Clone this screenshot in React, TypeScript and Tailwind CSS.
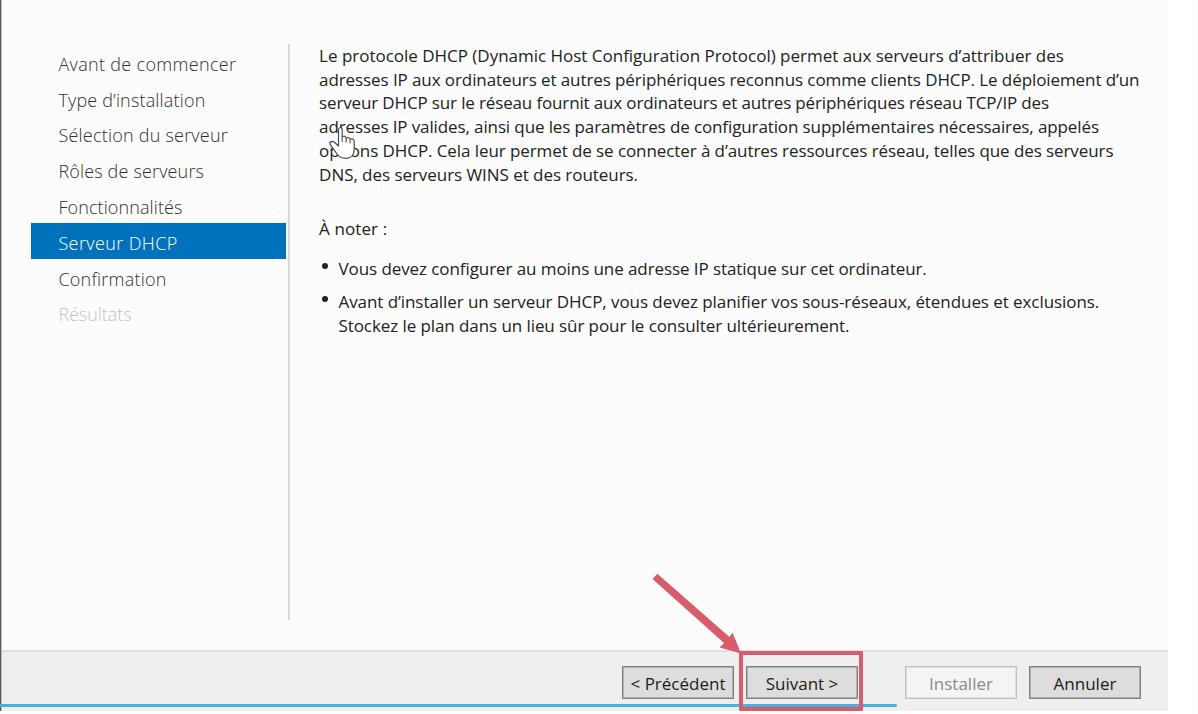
type Line = { text: string; className: string };

const intro: Line[] = [
  { text: "Le protocole DHCP (Dynamic Host Configuration Protocol) permet aux serveurs d’attribuer des", className: "tracking-[-0.015px]" },
  { text: "adresses IP aux ordinateurs et autres périphériques reconnus comme clients DHCP. Le déploiement d’un", className: "tracking-[-0.09px]" },
  { text: "serveur DHCP sur le réseau fournit aux ordinateurs et autres périphériques réseau TCP/IP des", className: "tracking-[-0.145px]" },
  { text: "adresses IP valides, ainsi que les paramètres de configuration supplémentaires nécessaires, appelés", className: "tracking-[-0.115px]" },
  { text: "options DHCP. Cela leur permet de se connecter à d’autres ressources réseau, telles que des serveurs", className: "tracking-[-0.085px]" },
  { text: "DNS, des serveurs WINS et des routeurs.", className: "tracking-[-0.05px]" },
];

const notes: Line[][] = [
  [{ text: "Vous devez configurer au moins une adresse IP statique sur cet ordinateur.", className: "tracking-[-0.08px]" }],
  [
    { text: "Avant d’installer un serveur DHCP, vous devez planifier vos sous-réseaux, étendues et exclusions.", className: "tracking-[-0.07px]" },
    { text: "Stockez le plan dans un lieu sûr pour le consulter ultérieurement.", className: "tracking-[-0.08px]" },
  ],
];

const steps: Line[] = [
  { text: "Avant de commencer", className: "tracking-[0.33px] text-[#303030]" },
  { text: "Type d’installation", className: "tracking-[0.17px] text-[#303030]" },
  { text: "Sélection du serveur", className: "tracking-[0.22px] text-[#303030]" },
  { text: "Rôles de serveurs", className: "tracking-[0.16px] text-[#303030]" },
  { text: "Fonctionnalités", className: "tracking-[0.1px] text-[#303030]" },
  { text: "Serveur DHCP", className: "tracking-[0.4px] bg-[#0072bc] text-white" },
  { text: "Confirmation", className: "tracking-[0.23px] text-[#303030]" },
  { text: "Résultats", className: "tracking-[-0.05px] text-[#c4c4c4]" },
];

function Lines({ lines }: { lines: Line[] }) {
  return (
    <>
      {lines.map((line) => (
        <span key={line.text} className={`block whitespace-nowrap ${line.className}`}>
          {line.text}
        </span>
      ))}
    </>
  );
}

function Button({ label, disabled = false }: { label: string; disabled?: boolean }) {
  return (
    <button
      type="button"
      disabled={disabled}
      className={`flex h-[33px] w-[112px] items-center justify-center whitespace-nowrap border pt-[2px] text-[17px] leading-none ${
        disabled
          ? "border-[#bcc1c5] bg-[#f4f4f4] text-[#8b8b8b] shadow-[inset_0_0_0_1px_#dcdfe1]"
          : "border-[#808080] bg-[#dddddd] text-[#1c1c1c] shadow-[inset_0_0_0_1px_#b0b0b0]"
      }`}
    >
      {label}
    </button>
  );
}

export default function App() {
  return (
    <div className="relative h-[714px] w-[1198px] overflow-hidden border-r border-[#f8f8f8] bg-white font-['Open_Sans','Noto_Sans',sans-serif]">
      <div className="flex h-[711px] w-[1168px]">
        <div className="h-full w-px shrink-0 bg-[#5a5a5c]" />
        <div className="h-full w-px shrink-0 bg-[#bdbdbd]" />
        <div className="flex min-w-0 flex-1 flex-col bg-[#fcfcfc]">
          <div className="flex h-[650px] pt-[44px]">
            <nav className="ml-[29px] w-[255px] pt-[0.2px]">
              {steps.map((step) => (
                <div
                  key={step.text}
                  className={`flex h-[35.8px] items-center whitespace-nowrap pl-[27.4px] pt-[3.4px] text-[18px] leading-none font-[350] ${step.className}`}
                >
                  {step.text}
                </div>
              ))}
            </nav>
            <div className="ml-[1.5px] h-[576px] w-[2px] bg-[#dadada]" />
            <main className="ml-[29.6px] text-[17px] leading-[23.9px] text-[#222]">
              <p className="-mt-[0.4px]">
                <Lines lines={intro} />
              </p>
              <p className="mt-[30.4px] tracking-[0.1px]">À noter :</p>
              <ul className="mt-[16px] flex flex-col gap-[9px]">
                {notes.map((lines) => (
                  <li key={lines[0].text} className="flex">
                    <span className="ml-[2.6px] mr-[10.8px] mt-[6px] size-[6px] rounded-full bg-[#222]" />
                    <div>
                      <Lines lines={lines} />
                    </div>
                  </li>
                ))}
              </ul>
            </main>
          </div>
          <footer className="flex flex-1 border-t-2 border-[#e0e0e0] bg-[#efefef] pl-[620px] pt-[14px]">
            <Button label="< Précédent" />
            <div className="ml-[12px]">
              <Button label="Suivant >" />
            </div>
            <div className="ml-[47px]">
              <Button label="Installer" disabled />
            </div>
            <div className="ml-[12px]">
              <Button label="Annuler" />
            </div>
          </footer>
        </div>
      </div>

      <div className="absolute left-0 top-[704px] h-[3px] w-[897px] rounded-r-full bg-[#47b1d9]" />
      <div className="absolute left-[739px] top-[651px] h-[60px] w-[124px] rounded-[1px] border-4 border-[#d75c6c]" />
      <svg className="absolute left-[640px] top-[565px]" width="110" height="95" viewBox="640 565 110 95">
        <path d="M657.3 573.8 729.5 637 732.5 632.5 741 653.5 719.5 647.5 724 643 652.5 579Z" fill="#d75c6c" />
      </svg>
      <svg className="absolute left-[326px] top-[124px]" width="32" height="38" viewBox="0 0 32 38">
        <path
          d="M12.5 20V5.7Q12.7 3.5 14.3 3.5Q16 3.5 16.2 5.7V12.6Q19.5 11.5 20.2 14Q23.5 12.9 24.1 15.2Q28 14 28.2 17.5V25Q28.2 34.3 19.8 34.3Q13.8 34.3 11 30L4 20.2Q3.3 18.4 5.2 17.6Q6.8 17 8.5 18.3L12.5 22Z"
          fill="white"
          stroke="#4b4b55"
          strokeWidth="1.2"
          strokeLinejoin="round"
        />
        <path d="M16.2 12.6V18M20.2 14V18.6M24.1 15.2V19.2" fill="none" stroke="#4b4b55" strokeWidth="1.1" />
      </svg>
    </div>
  );
}
